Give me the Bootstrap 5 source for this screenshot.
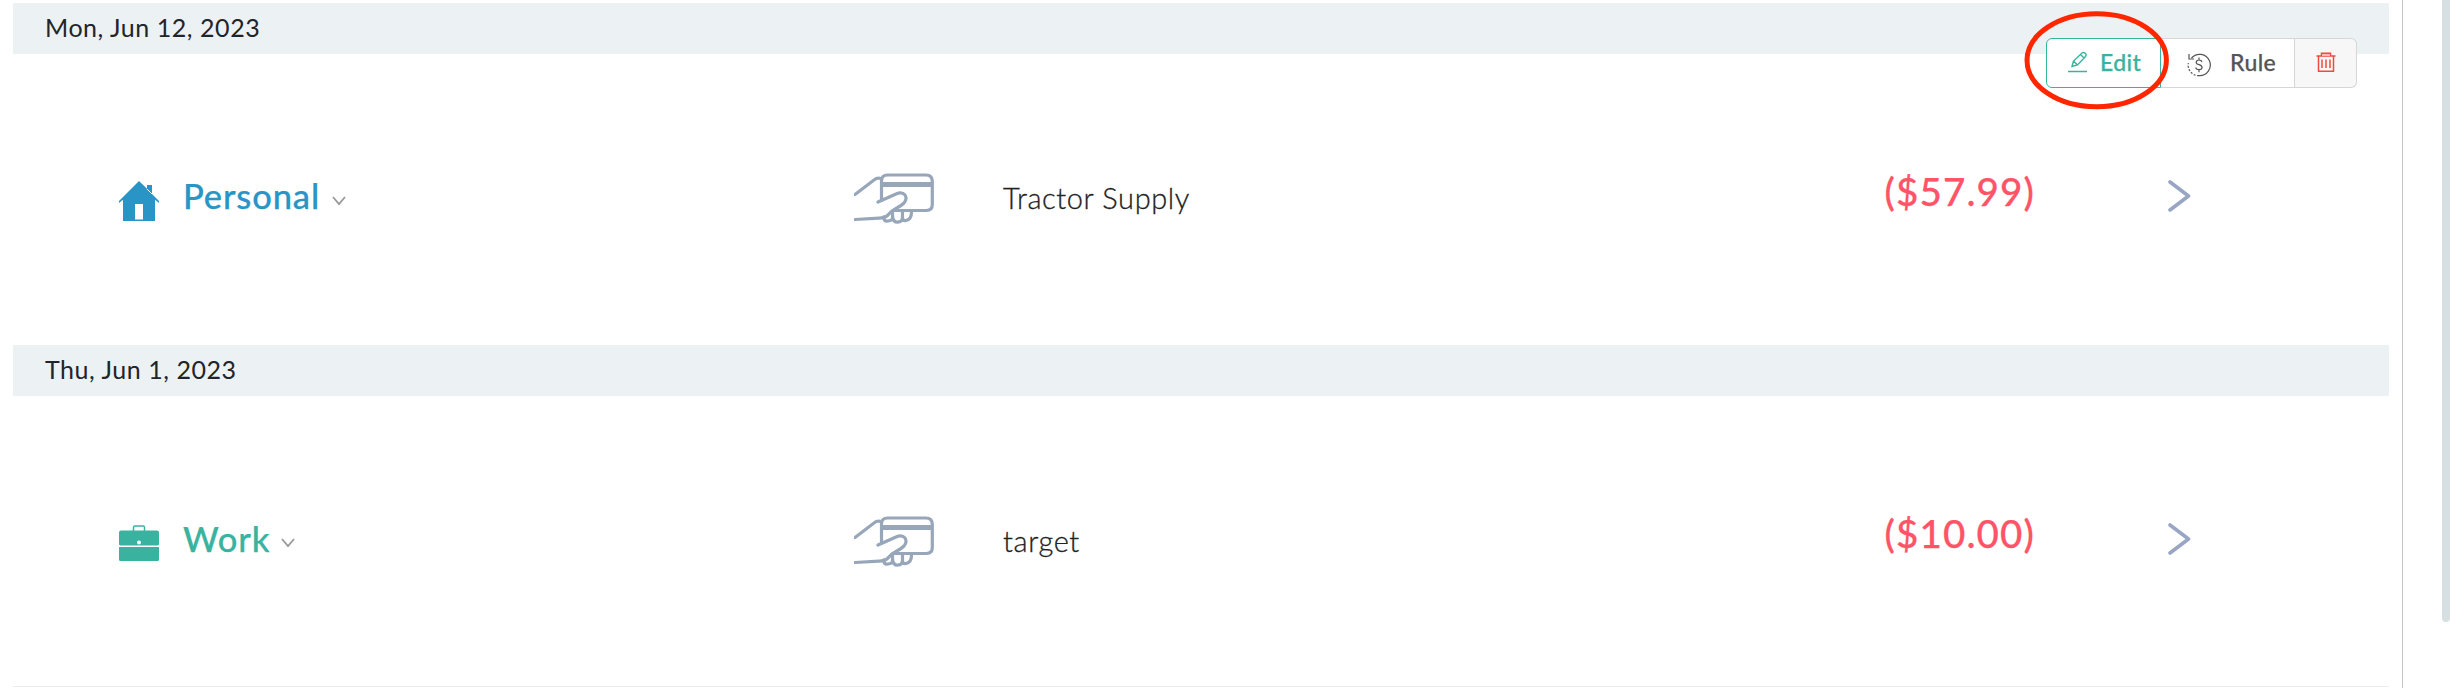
<!DOCTYPE html>
<html lang="en">
<head>
<meta charset="utf-8">
<title>Transactions</title>
<link href="https://cdn.jsdelivr.net/npm/bootstrap@5.3.0/dist/css/bootstrap.min.css" rel="stylesheet">
<style>
body{font-family:Lato,"Liberation Sans",sans-serif;color:#212529;background:#fff;overflow:hidden}
.page{height:688px}
.ledger{width:2403px;padding:3px 13px 0 13px;border-right:1px solid #c4c5c7}
.day{width:2376px}
.day-head{height:51px;background:#ecf1f4;padding-left:32px;font-size:25px;line-height:48px;letter-spacing:.55px}
.entry{height:291px;display:grid;grid-template-columns:735px 149px 883px 282px 1fr;padding-left:106px}
.last{border-bottom:1px solid #ebedee}
.cat{padding-top:122px;font-size:34.5px;line-height:40px;font-weight:500;letter-spacing:.85px;-webkit-text-stroke:.25px currentColor}
.cat .ic{width:40px;height:40px;margin-top:5px;margin-right:24px;flex:none}
.cat .caret{width:14px;height:10px;margin-top:20px;margin-left:12px;flex:none}
.personal{color:#2995c6}
.work{color:#39b3a0}
.work span{padding-top:1px}
.work .caret{margin-left:11px}
.hand{width:80px;height:51px;margin-top:118.5px}
.payee{padding-top:124px;font-size:29px;line-height:40px;font-weight:300;color:#222;letter-spacing:.6px;-webkit-text-stroke:.3px currentColor}
.last .payee{padding-top:125px}
.last .hand{margin-top:119.5px}
.amount{padding-top:113.5px;margin-left:-1.5px;font-size:38.6px;line-height:46px;font-weight:500;color:#ff5468;letter-spacing:1.1px;-webkit-text-stroke:.25px currentColor}
.go{width:24px;height:34px;margin-top:125px;margin-left:-1px}
.last .go{margin-top:126px}
.tools{left:2046px;top:38px;height:50px}
.tools .btn{font-size:23px;line-height:46px;padding:0;border:1px solid #d6d6d6;background:#fff;display:flex;border-radius:0;height:50px;font-weight:500;color:#555;letter-spacing:.4px;-webkit-text-stroke:.25px currentColor}
.tools .b-edit{width:115px;border-color:#39b3a0;color:#39b3a0;border-radius:6px 0 0 6px;padding-left:20px;flex:none}
.tools .b-rule{width:134px;border-left:0;padding-left:26px;flex:none;margin-left:0!important}
.tools .b-del{width:62px;border-left:0;background:#f7f7f7;border-radius:0 6px 6px 0;padding-left:21px;flex:none;margin-left:0!important}
.pencil{margin-top:12px;margin-right:12px}
.cycle{margin-top:14px;margin-right:19px}
.bin{margin-top:12.5px}
.ring{left:2024px;top:10px;width:146px;height:100px}
.thumb{width:8px;height:622px;background:#d6dfe2;border-bottom-left-radius:4px;border-bottom-right-radius:4px}
</style>
</head>
<body>
<svg width="0" height="0" class="position-absolute">
  <symbol id="hand" viewBox="0 0 80 51">
    <g fill="none" stroke="#97a6b9" stroke-width="3.2" stroke-linecap="round" stroke-linejoin="round">
      <path d="M1 21.500L20 7Q23 4.500 27 5.500"/>
      <path d="M27.500 27V8Q27.500 2 33.500 2H72Q78.300 2 78.300 8.500V31.500Q78.300 37.500 72.500 37.500H39"/>
      <path d="M24 29L42 21Q48 18.500 51 22Q53.500 26 50 30Q47 33 42 35.500Q37 38 34 42Q31 45 25 45.200L1 46.500"/>
      <path d="M30 44Q29 48.500 34 48Q38.500 47.500 38.500 45V39M38.500 43Q39 49.200 43.500 49.200Q48.500 49.200 48.500 44V39M48.500 44Q48.500 48.300 52 47.500Q57.500 46.500 57.500 39"/>
    </g>
    <path d="M27 9h51v5H27z" fill="#97a6b9"/>
  </symbol>
  <symbol id="caret" viewBox="0 0 14 10"><path d="M1 1l6 7 6-7" fill="none" stroke="#999" stroke-width="1.8"/></symbol>
  <symbol id="go" viewBox="0 0 24 34"><path d="M3 3l18.500 14L3 31" fill="none" stroke="#98a6c4" stroke-width="3.600" stroke-linecap="round" stroke-linejoin="round"/></symbol>
</svg>

<div class="page d-flex justify-content-between position-relative">
  <main class="ledger">
    <section class="day">
      <div class="day-head">Mon, Jun 12, 2023</div>
      <div class="entry">
        <div class="cat personal d-flex align-items-start">
          <svg class="ic" viewBox="0 0 40 40"><path fill="currentColor" d="M20 0l8 7.800V4h5v9l7 7v2l-4-3.200V40H4V18.800L0 22v-2z"/><path d="M28 8l5 5" stroke="#fff" stroke-width="1"/><path fill="#fff" d="M16 23h8v15.500h-8z"/></svg>
          <span>Personal</span>
          <svg class="caret"><use href="#caret"/></svg>
        </div>
        <svg class="hand"><use href="#hand"/></svg>
        <div class="payee">Tractor Supply</div>
        <div class="amount">($57.99)</div>
        <svg class="go"><use href="#go"/></svg>
      </div>
    </section>
    <section class="day">
      <div class="day-head">Thu, Jun 1, 2023</div>
      <div class="entry last">
        <div class="cat work d-flex align-items-start">
          <svg class="ic" viewBox="0 0 40 40"><path d="M14.500 8V4.500Q14.500 3 16 3h8q1.500 0 1.500 1.500V8" fill="none" stroke="currentColor" stroke-width="1.500"/><path fill="currentColor" d="M2 7.500h36q2 0 2 2V21q0 1.500-1.500 1.500h-37Q0 22.500 0 21V9.500q0-2 2-2zM0 24h40v12.500q0 1.500-1.500 1.500h-37Q0 38 0 36.500z"/><circle cx="20" cy="19.500" r="2" fill="#fff"/></svg>
          <span>Work</span>
          <svg class="caret"><use href="#caret"/></svg>
        </div>
        <svg class="hand"><use href="#hand"/></svg>
        <div class="payee">target</div>
        <div class="amount">($10.00)</div>
        <svg class="go"><use href="#go"/></svg>
      </div>
    </section>
  </main>
  <div class="thumb"></div>

  <div class="tools btn-group position-absolute">
    <button class="btn b-edit" type="button"><svg class="pencil" width="21" height="22" viewBox="0 0 21 22" fill="none" stroke="currentColor" stroke-width="1.400"><path d="M1 20.500h19M5 15.500l1.500-5.500L15 2q1.500-1.200 3.200.2t.3 3.300L10.500 14zM13.500 3.500l3.500 3.500M6.500 10l4 4"/></svg>Edit</button>
    <button class="btn b-rule" type="button"><svg class="cycle" width="24" height="24" viewBox="0 0 24 24" fill="none" stroke="#555" stroke-width="1.200"><path d="M4.500 5A10.700 10.700 0 1 1 12 22.700"/><path d="M12 22.700A10.700 10.700 0 0 1 1.300 10" stroke-dasharray="2 1.500"/><path d="M2 1v5h5"/><path d="M15 9q-.5-2-3-2t-2.800 2.200q0 1.800 2.800 2.500 3 .8 3 2.800 0 2.200-3 2.200t-3.200-2.200M12 4.500V7m0 9.700v2.500"/></svg>Rule</button>
    <button class="btn b-del" type="button" aria-label="Delete"><svg class="bin" width="20" height="21" viewBox="0 0 20 21" fill="none" stroke="#ee4b3e" stroke-width="1.500"><path d="M.5 4h19M5.500 4V1.300h9V4M2.500 4v15.200h15V4M6 7.500v8.500M10 7.500v8.500M14 7.500v8.500"/><path d="M6 2h8v2H6z" fill="#f9bab5" stroke="none"/></svg></button>
  </div>
  <svg class="ring position-absolute" viewBox="0 0 146 100"><ellipse cx="72.700" cy="50.300" rx="69.700" ry="46.500" fill="none" stroke="#ff2600" stroke-width="5"/></svg>
</div>
<script src="https://cdn.jsdelivr.net/npm/bootstrap@5.3.0/dist/js/bootstrap.bundle.min.js"></script>
</body>
</html>
